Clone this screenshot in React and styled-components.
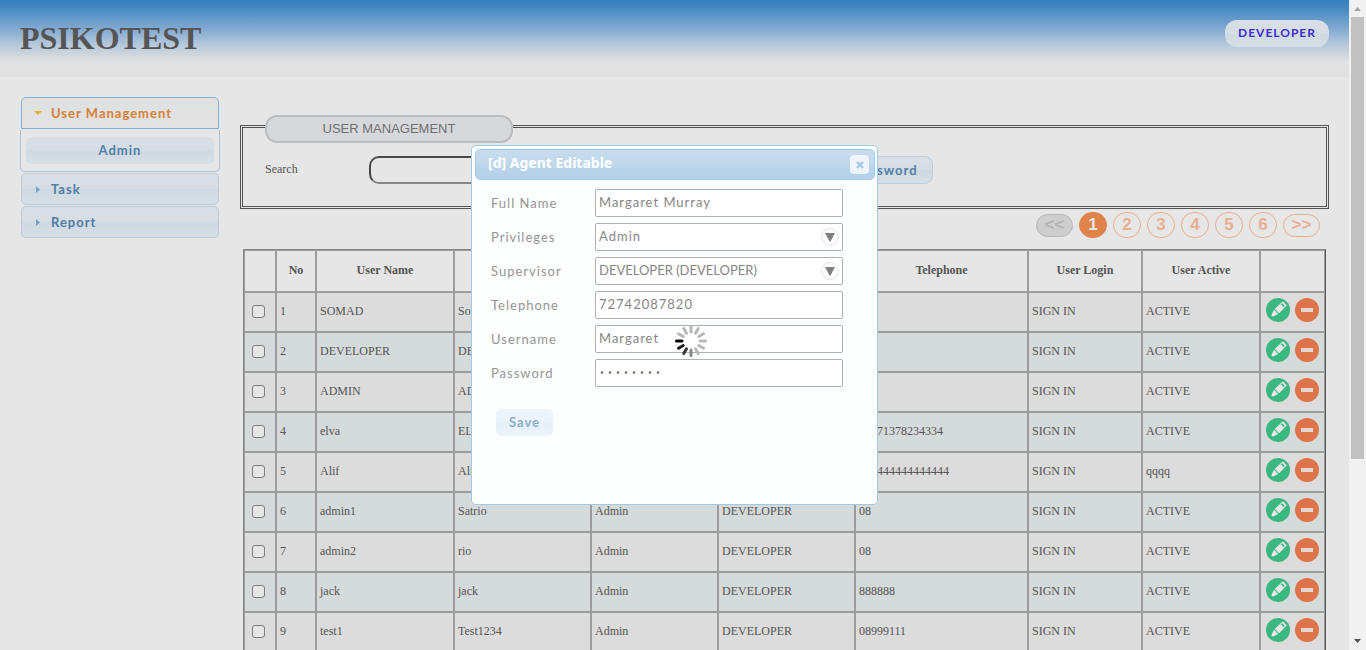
import React from "react";
import styled, { createGlobalStyle, css } from "styled-components";

const ui = `"Lucida Grande", "Lucida Sans", Lato, sans-serif`;
const heading = `"Lucida Grande", "Noto Sans", sans-serif`;
const serif = `"Liberation Serif", "Times New Roman", serif`;
const sans = `"Liberation Sans", Arial, sans-serif`;

const GlobalStyle = createGlobalStyle`
  *, *::before, *::after { box-sizing: border-box; }
  body { margin: 0; background: #e6e6e6; color: #555; font: 12px/16px ${serif}; }
  button, input, select { font: inherit; color: inherit; margin: 0; }
`;

const Window = styled.div`
  display: flex;
  height: 100vh;
  overflow: hidden;
`;

const Page = styled.div`
  position: relative;
  flex: 1;
  min-width: 0;
  overflow: hidden;
`;

const Header = styled.header`
  display: flex;
  justify-content: space-between;
  align-items: flex-start;
  height: 77px;
  padding: 20px 20px 0;
  background: linear-gradient(#3580c0 0, #3f86c1 6px, #7fa8d0 28px, #b3c7da 44px, #e1e1e1 62px);
`;

const Brand = styled.h1`
  margin: 0;
  font-size: 32px;
  line-height: 37px;
`;

const glass = css`
  background: linear-gradient(#d9dfe4 0, #d5dde4 50%, #ced9e2 51%, #d8dfe6 100%);
`;

const UserButton = styled.button`
  ${glass}
  height: 27px;
  padding: 0 13px 2px;
  border: 0;
  border-radius: 12px;
  color: #3b2bdc;
  font: bold 12px/24px ${ui};
  letter-spacing: 1px;
`;

const Body = styled.div`
  display: flex;
  align-items: flex-start;
  gap: 20px;
  padding: 20px 20px 0;
`;

const Menu = styled.nav`
  display: flex;
  flex-direction: column;
  gap: 1px;
  width: 200px;
  flex: none;
  font: bold 13px/18px ${ui};
  letter-spacing: 1px;
`;

const MenuHead = styled.button`
  ${glass}
  display: flex;
  align-items: center;
  gap: 9px;
  height: 32px;
  margin: 0 1px;
  padding: 0 11px;
  border: 1px solid #b9cbda;
  border-radius: 5px;
  color: #517ea5;
  font: inherit;
  letter-spacing: inherit;
  text-align: left;
  ${(p) =>
    p.$open &&
    css`
      background: linear-gradient(#dfe0e1, #e3e3e3);
      border-color: #86afd3;
      border-radius: 5px 5px 0 0;
      color: #d67f3a;
    `}
`;

const MenuPanel = styled.div`
  display: flex;
  height: 42px;
  padding: 7px 5px;
  border: 1px solid #a6c0d6;
  border-top: 0;
  border-radius: 0 0 5px 5px;
`;

const MenuItem = styled.button`
  ${glass}
  flex: 1;
  padding: 0 0 1px;
  border: 0;
  border-radius: 5px;
  color: #517ea5;
  font: inherit;
  letter-spacing: inherit;
`;

const Main = styled.main`
  flex: 1;
  min-width: 0;
  padding-top: 18px;
`;

const FilterBox = styled.fieldset`
  margin: 0;
  height: 94px;
  padding: 18px 22px 0;
  border: 3px double #555;
`;

const FilterLegend = styled.legend`
  width: 248px;
  height: 23px;
  padding: 0;
`;

const FilterTitle = styled.span`
  display: block;
  height: 28px;
  border: 2px solid #bcbdbf;
  border-radius: 12px;
  background: #d7d8dc;
  color: #707070;
  font: 13px/23px ${sans};
  text-align: center;
`;

const FilterRow = styled.div`
  display: flex;
  align-items: center;
`;

const FilterLabel = styled.label`
  width: 104px;
  padding-bottom: 2px;
`;

const FilterInput = styled.input`
  width: 200px;
  height: 28px;
  margin-right: 10px;
  padding: 0 8px;
  border: 2px solid;
  border-color: #484848 #858585 #858585 #484848;
  border-radius: 10px;
  background: #e6e6e6;
`;

const ToolButton = styled.button`
  ${glass}
  width: 136px;
  height: 28px;
  margin-left: 218px;
  border: 1px solid #bccfde;
  border-radius: 8px;
  color: #517ea5;
  font: bold 13px/24px ${ui};
  letter-spacing: 1px;
  white-space: nowrap;
`;

const Pager = styled.nav`
  display: flex;
  justify-content: flex-end;
  align-items: center;
  gap: 6px;
  height: 26px;
  margin: 3px 9px 11px;
`;

const PageButton = styled.button`
  width: 28px;
  height: 26px;
  padding: 0;
  border: 1px solid #e8b092;
  border-radius: 13px;
  background: none;
  color: #e8b092;
  font: bold 17px/24px ${sans};
  ${(p) => p.$end && css`width: 37px; height: 23px; line-height: 20px;`}
  ${(p) => p.$current && css`background: #df834b; border-color: #df834b; color: #e9e6e4;`}
  &:disabled { background: #cecece; border-color: #b8b8b8; color: #b3b3b3; }
`;

const Users = styled.table`
  width: calc(100% - 6px);
  margin: 0 3px;
  table-layout: fixed;
  border-collapse: separate;
  border-spacing: 0;
  border: 1px solid #868686;
  border-right-color: #555;
`;

const HeadCell = styled.th`
  height: 42px;
  padding: 0 3px 2px;
  border: 1px solid #9c9c9c;
`;

const UserRow = styled.tr`
  background: #dcdcdc;
  &:nth-child(even) { background: #d5dada; }
`;

const Cell = styled.td`
  height: 40px;
  padding: 0 3px 2px;
  border: 1px solid #9c9c9c;
  white-space: nowrap;
  ${(p) => p.$center && css`text-align: center; padding: 0 0 2px;`}
`;

const Tick = styled.input`
  appearance: none;
  display: block;
  width: 13px;
  height: 13px;
  margin: 0 0 0 7px;
  border: 1px solid #7d7d7d;
  border-radius: 3px;
  background: #e6e6e6;
`;

const Actions = styled.div`
  display: flex;
  gap: 5px;
  padding: 0 0 2px 5px;
`;

const IconButton = styled.button`
  display: block;
  width: 24px;
  height: 24px;
  padding: 0;
  border: 0;
  background: none;
  svg { display: block; }
`;

const Overlay = styled.div`
  position: absolute;
  inset: 0;
  display: grid;
  place-items: center;
`;

const Dialog = styled.section`
  position: relative;
  width: 407px;
  height: 360px;
  padding: 3px;
  border: 1px solid #a3c9e4;
  border-radius: 5px;
  background: #fdfefe;
  color: #949494;
  font: 13px/18px ${ui};
  letter-spacing: 1px;
`;

const TitleBar = styled.div`
  display: flex;
  align-items: center;
  justify-content: space-between;
  height: 31px;
  margin-right: -1px;
  padding: 0 5px 0 12px;
  border: 1px solid #a3cbe8;
  border-radius: 5px;
  background: linear-gradient(#c8dcee 0, #c0d8eb 50%, #b8d3e9 65%, #b4d2e8 100%);
`;

const DialogTitle = styled.h2`
  margin: 0;
  padding-bottom: 3px;
  color: #fff;
  font: bold 14px/18px ${heading};
  letter-spacing: 0;
`;

const Close = styled.button`
  display: grid;
  place-items: center;
  width: 19px;
  height: 19px;
  padding: 0;
  border: 0;
  border-radius: 4px;
  background: #edf4fb;
`;

const Form = styled.form`
  display: grid;
  gap: 6px;
  padding: 9px 31px 0 16px;
  label { padding-bottom: 1px; }
`;

const Field = styled.div`
  position: relative;
  display: grid;
  grid-template-columns: 104px 1fr;
  align-items: center;
  > svg { position: absolute; right: 4px; top: 5px; pointer-events: none; }
`;

const control = css`
  appearance: none;
  width: 100%;
  height: 28px;
  padding: 0 3px 2px;
  border: 1px solid #b0b0b0;
  border-radius: 2px;
  background: #fff;
  color: #868686;
  letter-spacing: 1px;
`;

const TextInput = styled.input`
  ${control}
  &[type="password"] {
    font-family: "Liberation Mono", monospace;
    font-size: 10px;
    letter-spacing: 2px;
    padding-bottom: 0;
  }
`;

const Select = styled.select`
  ${control}
  letter-spacing: ${(p) => (p.$tight ? "0" : "1px")};
`;

const Save = styled.button`
  width: 57px;
  height: 27px;
  margin: 16px 0 0 5px;
  padding: 0 0 1px;
  border: 0;
  border-radius: 5px;
  background: linear-gradient(#edf4fc 0, #eaf3fb 50%, #e4eff9 51%, #eef5fc 100%);
  color: #8caecb;
  font: bold 13px/18px ${ui};
  letter-spacing: 1px;
`;

const Loader = styled.svg`
  position: absolute;
  left: 203px;
  top: 179px;
`;

const ScrollTrack = styled.div`
  display: flex;
  flex-direction: column;
  justify-content: space-between;
  align-items: center;
  width: 17px;
  background: #f1f1f1;
`;

const ScrollThumb = styled.div`
  width: 13px;
  height: 68%;
  margin-bottom: auto;
  background: #c1c1c1;
`;

const Pencil = () => (
  <svg width="24" height="24" viewBox="0 0 24 24">
    <circle cx="12" cy="12" r="12" fill="#3bb87f" />
    <g transform="rotate(45 12 12)" fill="#e6e6e6">
      <path d="M9.200 2.400h5.600v1.800H9.200z" />
      <path d="M9.200 4h1v2h-1zM13.800 4h1v2h-1z" />
      <path d="M9 6h6v7.600H9z" />
      <path d="M9 14.600h6L13 20.500h-2z" />
    </g>
  </svg>
);

const Minus = () => (
  <svg width="24" height="24" viewBox="0 0 24 24">
    <circle cx="12" cy="12" r="12" fill="#dd744a" />
    <path d="M6 10h12v4H6z" fill="#e6d5cf" />
  </svg>
);

const Down = () => (
  <svg width="18" height="18" viewBox="0 0 18 18">
    <circle cx="9" cy="9" r="8.5" fill="#fefefe" stroke="#e4e4e4" />
    <path d="M4 5h10L9.5 13.5h-1z" fill="#808080" />
  </svg>
);

const Triangle = ({ open }) => (
  <svg width="9" height="9" viewBox="0 0 9 9">
    {open ? <path d="M1 2h8L5 6z" fill="#e0b033" /> : <path d="M3 1v7l4-3.5z" fill="#6fa3cd" />}
  </svg>
);

const Arrow = ({ up }) => (
  <svg width="17" height="17" viewBox="0 0 17 17">
    <path d={up ? "M5 11h7L8.500 7z" : "M5 6h7L8.500 10z"} fill={up ? "#a3a3a3" : "#505050"} />
  </svg>
);

const spokes = ["#b8b8b8", "#b8b8b8", "#b8b8b8", "#b8b8b8", "#b8b8b8", "#b8b8b8", "#888", "#383838", "#1c1c1c", "#000", "#b8b8b8", "#b8b8b8"];

const Spinner = () => (
  <Loader width="32" height="32" viewBox="0 0 32 32" role="img" aria-label="Loading">
    {spokes.map((c, i) => (
      <path key={i} d="M16 1.500v5.500" stroke={c} strokeWidth="3" strokeLinecap="round" transform={`rotate(${i * 30} 16 16)`} />
    ))}
  </Loader>
);

const columns = [
  ["", 32], ["No", 40], ["User Name", 138], ["", 137], ["", 127],
  ["", 137], ["Telephone", 173], ["User Login", 114], ["User Active", 118], ["", 65],
];

const users = [
  ["SOMAD", "Som", "", "ACTIVE"],
  ["DEVELOPER", "DEV", "", "ACTIVE"],
  ["ADMIN", "ADM", "", "ACTIVE"],
  ["elva", "ELVA", "08571378234334", "ACTIVE"],
  ["Alif", "Alif", "444444444444444", "qqqq"],
  ["admin1", "Satrio", "08", "ACTIVE"],
  ["admin2", "rio", "08", "ACTIVE"],
  ["jack", "jack", "888888", "ACTIVE"],
  ["test1", "Test1234", "08999111", "ACTIVE"],
];

const fields = [
  { id: "fullname", label: "Full Name", value: "Margaret Murray" },
  { id: "privileges", label: "Privileges", value: "Admin", select: true },
  { id: "supervisor", label: "Supervisor", value: "DEVELOPER (DEVELOPER)", select: true, tight: true },
  { id: "telephone", label: "Telephone", value: "72742087820" },
  { id: "username", label: "Username", value: "Margaret" },
  { id: "password", label: "Password", value: "margaret", type: "password" },
];

export default function App() {
  return (
    <Window>
      <GlobalStyle />
      <Page>
        <Header>
          <Brand>PSIKOTEST</Brand>
          <UserButton type="button">DEVELOPER</UserButton>
        </Header>
        <Body>
          <Menu>
            <MenuHead type="button" $open><Triangle open />User Management</MenuHead>
            <MenuPanel><MenuItem type="button">Admin</MenuItem></MenuPanel>
            <MenuHead type="button"><Triangle />Task</MenuHead>
            <MenuHead type="button"><Triangle />Report</MenuHead>
          </Menu>
          <Main>
            <FilterBox>
              <FilterLegend><FilterTitle>USER MANAGEMENT</FilterTitle></FilterLegend>
              <FilterRow>
                <FilterLabel htmlFor="search">Search</FilterLabel>
                <FilterInput id="search" type="text" />
                <ToolButton type="button">Reset Password</ToolButton>
              </FilterRow>
            </FilterBox>
            <Pager>
              <PageButton type="button" $end disabled>&lt;&lt;</PageButton>
              {[1, 2, 3, 4, 5, 6].map((n) => (
                <PageButton key={n} type="button" $current={n === 1}>{n}</PageButton>
              ))}
              <PageButton type="button" $end>&gt;&gt;</PageButton>
            </Pager>
            <Users>
              <colgroup>{columns.map(([, w], i) => <col key={i} width={w} />)}</colgroup>
              <thead>
                <tr>{columns.map(([name], i) => <HeadCell key={i}>{name}</HeadCell>)}</tr>
              </thead>
              <tbody>
                {users.map(([user, full, phone, active], i) => (
                  <UserRow key={user}>
                    <Cell $center><Tick type="checkbox" aria-label={`Select ${user}`} /></Cell>
                    <Cell>{i + 1}</Cell>
                    <Cell>{user}</Cell>
                    <Cell>{full}</Cell>
                    <Cell>Admin</Cell>
                    <Cell>DEVELOPER</Cell>
                    <Cell>{phone}</Cell>
                    <Cell>SIGN IN</Cell>
                    <Cell>{active}</Cell>
                    <Cell $center>
                      <Actions>
                        <IconButton type="button" aria-label="Edit"><Pencil /></IconButton>
                        <IconButton type="button" aria-label="Delete"><Minus /></IconButton>
                      </Actions>
                    </Cell>
                  </UserRow>
                ))}
              </tbody>
            </Users>
          </Main>
        </Body>
        <Overlay>
          <Dialog role="dialog" aria-labelledby="dialog-title">
            <TitleBar>
              <DialogTitle id="dialog-title">[d] Agent Editable</DialogTitle>
              <Close type="button" aria-label="Close">
                <svg width="8" height="8" viewBox="0 0 8 8">
                  <path d="M1 1l6 6M7 1L1 7" stroke="#a5cbe6" strokeWidth="2.400" />
                </svg>
              </Close>
            </TitleBar>
            <Form>
              {fields.map((f) => (
                <Field key={f.id}>
                  <label htmlFor={f.id}>{f.label}</label>
                  {f.select ? (
                    <Select id={f.id} $tight={f.tight}><option>{f.value}</option></Select>
                  ) : (
                    <TextInput id={f.id} type={f.type || "text"} defaultValue={f.value} />
                  )}
                  {f.select && <Down />}
                </Field>
              ))}
              <Save type="button">Save</Save>
            </Form>
            <Spinner />
          </Dialog>
        </Overlay>
      </Page>
      <ScrollTrack aria-hidden="true">
        <Arrow up />
        <ScrollThumb />
        <Arrow />
      </ScrollTrack>
    </Window>
  );
}
